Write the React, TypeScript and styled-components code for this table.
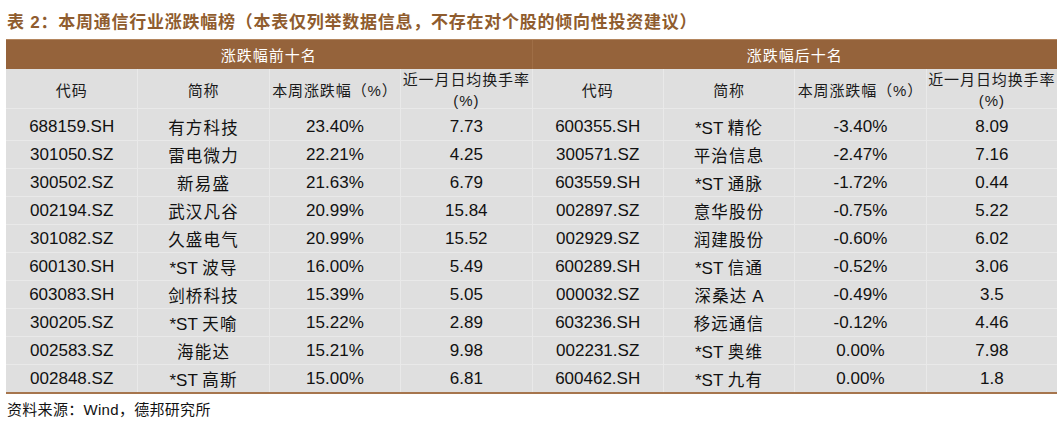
import React from "react";
import styled, { createGlobalStyle } from "styled-components";

const Global = createGlobalStyle`
  html, body { margin: 0; padding: 0; background: #ffffff; }
  body { font-family: "Liberation Sans", "Noto Sans CJK SC", sans-serif; color: #111; }
`;

const Page = styled.div`
  width: 1063px;
  padding: 12px 6px 0 6px;
  box-sizing: border-box;
`;

const Title = styled.div`
  font-family: "Liberation Sans", "Noto Sans CJK SC", sans-serif;
  font-weight: 700;
  font-size: 17px;
  line-height: 22px;
  letter-spacing: 0.75px;
  color: #8f5c2e;
  padding-left: 1px;
  height: 22px;
  margin-bottom: 5px;
`;

const Table = styled.div`
  width: 1051px;
  background: #dfdfdf;
  border-bottom: 2px solid #a6754d;
`;

const GroupRow = styled.div`
  display: grid;
  grid-template-columns: 1fr 1fr;
  height: 30px;
  background: #95633b;
  border-top: 1px solid #b4865f;
  box-sizing: border-box;
`;

const GroupCell = styled.div`
  display: flex;
  align-items: center;
  justify-content: center;
  color: #ffffff;
  font-family: "Noto Sans CJK SC", sans-serif;
  font-size: 15px;
  letter-spacing: 1px;
  & + & { border-left: 1px solid #9f6e46; }
`;

const Row = styled.div<{ $h: number }>`
  display: grid;
  grid-template-columns: repeat(8, 1fr);
  height: ${(p) => p.$h}px;
  & + & { border-top: 1px solid #e9e9e9; }
  box-sizing: border-box;
`;

const HeadCell = styled.div`
  display: flex;
  align-items: center;
  justify-content: center;
  text-align: center;
  font-family: "Liberation Sans", "Noto Sans CJK SC", sans-serif;
  font-size: 15px;
  line-height: 21px;
  letter-spacing: 0.9px;
  color: #1a1a1a;
  & + & { border-left: 1px solid #e9e9e9; }
`;

const Cell = styled.div<{ $pt: number }>`
  display: flex;
  align-items: center;
  justify-content: center;
  padding-top: ${(p) => p.$pt}px;
  box-sizing: border-box;
  font-family: "Liberation Sans", "Noto Sans CJK SC", sans-serif;
  font-size: 17px;
  color: #111;
  white-space: pre;
  & + & { border-left: 1px solid #e9e9e9; }
`;

const Cjk = styled.span`
  font-size: 16.5px;
  letter-spacing: 1.2px;
`;

const Footer = styled.div`
  margin-top: 6px;
  padding-left: 1px;
  font-family: "Liberation Sans", "Noto Sans CJK SC", sans-serif;
  font-size: 15px;
  line-height: 20px;
  letter-spacing: 0.3px;
  color: #111;
`;

type R = [string, string, string, string, string, string, string, string];

const rows: R[] = [
  ["688159.SH", "有方科技", "23.40%", "7.73", "600355.SH", "*ST 精伦", "-3.40%", "8.09"],
  ["301050.SZ", "雷电微力", "22.21%", "4.25", "300571.SZ", "平治信息", "-2.47%", "7.16"],
  ["300502.SZ", "新易盛", "21.63%", "6.79", "603559.SH", "*ST 通脉", "-1.72%", "0.44"],
  ["002194.SZ", "武汉凡谷", "20.99%", "15.84", "002897.SZ", "意华股份", "-0.75%", "5.22"],
  ["301082.SZ", "久盛电气", "20.99%", "15.52", "002929.SZ", "润建股份", "-0.60%", "6.02"],
  ["600130.SH", "*ST 波导", "16.00%", "5.49", "600289.SH", "*ST 信通", "-0.52%", "3.06"],
  ["603083.SH", "剑桥科技", "15.39%", "5.05", "000032.SZ", "深桑达 A", "-0.49%", "3.5"],
  ["300205.SZ", "*ST 天喻", "15.22%", "2.89", "603236.SH", "移远通信", "-0.12%", "4.46"],
  ["002583.SZ", "海能达", "15.21%", "9.98", "002231.SZ", "*ST 奥维", "0.00%", "7.98"],
  ["002848.SZ", "*ST 高斯", "15.00%", "6.81", "600462.SH", "*ST 九有", "0.00%", "1.8"],
];

const NameText: React.FC<{ text: string }> = ({ text }) => {
  const m = text.match(/^(\*ST )?(.*?)( A)?$/);
  const pre = m?.[1] ?? "";
  const mid = m?.[2] ?? text;
  const suf = m?.[3] ?? "";
  return (
    <span>
      {pre}
      <Cjk>{mid}</Cjk>
      {suf}
    </span>
  );
};

const heads = ["代码", "简称", "本周涨跌幅（%）", "近一月日均换手率\n(%)"];

export default function App() {
  return (
    <>
      <Global />
      <Page>
        <Title>表 2：本周通信行业涨跌幅榜（本表仅列举数据信息，不存在对个股的倾向性投资建议）</Title>
        <Table>
          <GroupRow>
            <GroupCell>涨跌幅前十名</GroupCell>
            <GroupCell>涨跌幅后十名</GroupCell>
          </GroupRow>
          <Row $h={39}>
            {[...heads, ...heads].map((h, i) => (
              <HeadCell key={i}>
                <span>
                  {h.split("\n").map((line, j) => (
                    <React.Fragment key={j}>
                      {j > 0 && <br />}
                      {line}
                    </React.Fragment>
                  ))}
                </span>
              </HeadCell>
            ))}
          </Row>
          {rows.map((r, i) => (
            <Row key={i} $h={i === 0 ? 32 : 28}>
              {r.map((c, j) => (
                <Cell key={j} $pt={i === 0 ? 5 : 0}>
                  {j === 1 || j === 5 ? <NameText text={c} /> : c}
                </Cell>
              ))}
            </Row>
          ))}
        </Table>
        <Footer>资料来源：Wind，德邦研究所</Footer>
      </Page>
    </>
  );
}
